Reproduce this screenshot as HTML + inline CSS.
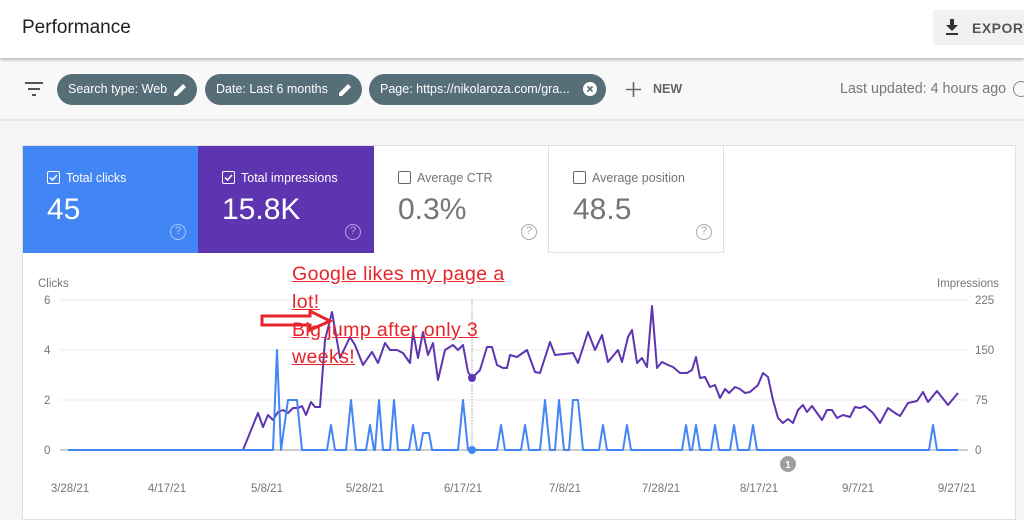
<!DOCTYPE html>
<html><head><meta charset="utf-8"><style>
*{margin:0;padding:0;box-sizing:border-box}
body{width:1024px;height:520px;overflow:hidden;background:#f5f5f5;font-family:"Liberation Sans",sans-serif;position:relative}
.hdr{position:absolute;left:0;top:0;width:1024px;height:58px;background:#fff;box-shadow:0 2px 3px rgba(0,0,0,.25);z-index:2}
.hdr h1{position:absolute;left:22px;top:17px;font-size:19px;font-weight:normal;color:#202124}
.exp{position:absolute;left:933px;top:10px;width:100px;height:35px;background:#f1f1f1;border-radius:3px}
.exp span{position:absolute;left:39px;top:10px;font-size:14px;font-weight:bold;color:#555;letter-spacing:.5px}
.bar{position:absolute;left:0;top:58px;width:1024px;height:63px;background:#f8f8f8;border-bottom:2px solid #e6e6e6}
.chip{position:absolute;top:16px;height:31px;background:#566e78;border-radius:16px;color:#fff;font-size:12.5px;line-height:31px;padding-left:11px}
.card{position:absolute;left:22px;top:145px;width:994px;height:375px;background:#fff;border:1px solid #e0e0e0}
.tile{position:absolute;top:0;height:107px;width:175px}
.tile .l{position:absolute;left:24px;top:25px;font-size:12.5px}
.tile .cb{display:inline-block;width:13px;height:13px;border:1.5px solid;border-radius:2px;vertical-align:-2px;margin-right:6px;position:relative}
.tile .cb svg{position:absolute;left:1px;top:1px}
.tile .n{position:absolute;left:24px;top:47px;font-size:30px}
.tile .q{position:absolute;left:147px;top:78px;width:16px;height:16px;border:1.5px solid;border-radius:50%;font-size:11px;text-align:center;line-height:13px}
.ann{position:absolute;left:292px;font-family:"Liberation Sans",sans-serif;font-size:19.5px;color:#e8242b;text-decoration:underline;white-space:nowrap;letter-spacing:.4px}
</style></head><body>
<div class="hdr"><h1>Performance</h1>
<div class="exp"><svg style="position:absolute;left:12px;top:9px" width="14" height="17" viewBox="0 0 14 17"><path d="M5 0h4v6h4L7 12 1 6h4z M1 14h12v2H1z" fill="#333"/></svg><span>EXPORT</span></div></div>
<div class="bar">
<svg style="position:absolute;left:25px;top:24px" width="18" height="14"><path d="M0 1h18M3 7h12M7 13h4" stroke="#555" stroke-width="2"/></svg>
<div class="chip" style="left:57px;width:140px">Search type: Web<svg style="position:absolute;right:10px;top:9px" width="13" height="13"><path d="M0 13v-3L9 1l3 3-9 9z" fill="#fff"/></svg></div>
<div class="chip" style="left:205px;width:157px">Date: Last 6 months<svg style="position:absolute;right:10px;top:9px" width="13" height="13"><path d="M0 13v-3L9 1l3 3-9 9z" fill="#fff"/></svg></div>
<div class="chip" style="left:369px;width:237px">Page: https://nikolaroza.com/gra...<svg style="position:absolute;right:9px;top:8px" width="14" height="14"><circle cx="7" cy="7" r="7" fill="#fff"/><path d="M4.5 4.5l5 5M9.5 4.5l-5 5" stroke="#566e78" stroke-width="1.6"/></svg></div>
<svg style="position:absolute;left:626px;top:24px" width="15" height="15"><path d="M7.5 0v15M0 7.5h15" stroke="#666" stroke-width="1.6"/></svg>
<span style="position:absolute;left:653px;top:24px;font-size:12.5px;font-weight:bold;color:#666">NEW</span>
<span style="position:absolute;left:840px;top:23px;font-size:14.3px;color:#777">Last updated: 4 hours ago</span>
<div style="position:absolute;left:1013px;top:23px;width:16px;height:16px;border:1.5px solid #888;border-radius:50%"></div>
</div>
<div class="card">
<div class="tile" style="left:0;background:#4285f4;color:#fff"><div class="l"><span class="cb" style="border-color:#fff"><svg width="9" height="9"><path d="M1 4.5l2.5 2.5L8 2" stroke="#fff" stroke-width="1.5" fill="none"/></svg></span>Total clicks</div><div class="n">45</div><div class="q" style="border-color:#a9c8fa;color:#a9c8fa">?</div></div>
<div class="tile" style="left:175px;width:176px;background:#5e35b1;color:#fff"><div class="l"><span class="cb" style="border-color:#fff"><svg width="9" height="9"><path d="M1 4.5l2.5 2.5L8 2" stroke="#fff" stroke-width="1.5" fill="none"/></svg></span>Total impressions</div><div class="n">15.8K</div><div class="q" style="border-color:#b6a0e0;color:#b6a0e0">?</div></div>
<div class="tile" style="left:351px;border-right:1px solid #e0e0e0;color:#757575"><div class="l"><span class="cb" style="border-color:#666"></span>Average CTR</div><div class="n">0.3%</div><div class="q" style="border-color:#aaa;color:#aaa">?</div></div>
<div class="tile" style="left:526px;border-right:1px solid #e0e0e0;border-bottom:1px solid #e0e0e0;color:#757575"><div class="l"><span class="cb" style="border-color:#666"></span>Average position</div><div class="n">48.5</div><div class="q" style="border-color:#aaa;color:#aaa">?</div></div>
</div>
<svg style="position:absolute;left:0;top:0" width="1024" height="520">
<g stroke="#e8e8e8" stroke-width="1"><path d="M60 300H968M60 350H968M60 400H968"/></g>
<path d="M60 450H968" stroke="#999" stroke-width="1"/>
<path d="M472 300V450" stroke="#999" stroke-dasharray="1.5 1.5"/>
<g font-size="11.5" fill="#757575">
<text x="38" y="287">Clicks</text><text x="937" y="287">Impressions</text>
<text x="44" y="304">6</text><text x="44" y="354">4</text><text x="44" y="404">2</text><text x="44" y="454">0</text>
<text x="975" y="304">225</text><text x="975" y="354">150</text><text x="975" y="404">75</text><text x="975" y="454">0</text>
<g text-anchor="middle"><text x="70" y="492">3/28/21</text><text x="167" y="492">4/17/21</text><text x="267" y="492">5/8/21</text><text x="365" y="492">5/28/21</text><text x="463" y="492">6/17/21</text><text x="565" y="492">7/8/21</text><text x="661" y="492">7/28/21</text><text x="759" y="492">8/17/21</text><text x="858" y="492">9/7/21</text><text x="957" y="492">9/27/21</text></g>
</g>
<polyline fill="none" stroke="#5e35b1" stroke-width="2" stroke-linejoin="round" points="243,450 258,413 263,427 268,415 273,420 278,412 283,410 288,413 293,408 298,408 302,406 306,415 311,402 315,407 320,407 325,340 332,312 340,358 350,337 355,345 363,365 372,352 378,363 385,343 390,350 397,350 403,353 410,363 413,332 418,358 423,332 428,355 433,343 438,380 445,350 453,345 458,350 463,345 468,372 472,378 480,370 487,347 492,347 497,365 503,368 507,368 510,355 517,357 527,350 535,372 540,373 550,342 555,355 573,353 578,363 588,332 595,350 602,335 608,362 618,350 622,362 628,337 632,330 637,363 642,358 647,367 652,306 657,368 662,362 668,365 673,367 680,373 687,373 692,370 696,357 700,378 705,377 710,387 715,385 720,398 725,389 729,393 735,387 740,389 745,393 750,392 758,385 763,373 768,377 773,400 778,418 783,423 788,419 793,423 798,410 803,405 807,412 812,406 822,420 827,410 832,410 837,418 843,415 850,417 855,407 860,408 865,406 873,413 880,423 888,408 895,413 900,416 908,403 917,401 923,392 928,402 937,391 948,405 958,393"/>
<polyline fill="none" stroke="#4285f4" stroke-width="2" stroke-linejoin="round" points="68,450 273,450 277,350 281,450 288,400 297,400 302,450 327,450 331,425 335,450 346,450 351,400 356,450 366,450 370,425 374,450 375,450 379,400 383,450 390,450 394,400 398,450 409,450 413,425 417,450 420,450 423,433 429,433 432,450 458,450 463,400 468,450 497,450 501,425 505,450 521,450 525,425 529,450 540,450 545,400 550,450 555,450 559,400 564,450 569,450 573,400 578,400 583,450 599,450 603,425 607,450 623,450 627,425 631,450 682,450 686,425 690,450 692,450 696,425 700,450 711,450 715,425 719,450 730,450 734,425 738,450 749,450 753,425 757,450 929,450 933,425 937,450 958,450"/>
<circle cx="472" cy="378" r="4" fill="#5e35b1"/><circle cx="472" cy="450" r="4" fill="#4285f4"/>
<circle cx="788" cy="464" r="8" fill="#9e9e9e"/><text x="788" y="468" font-size="10" font-weight="bold" fill="#fff" text-anchor="middle">1</text>
<path d="M262 316H310V311L330 321L310 330V325H262Z" fill="#fff" stroke="#e8242b" stroke-width="3"/>
</svg>
<div class="ann" style="top:263px">Google likes my page a</div>
<div class="ann" style="top:291px">lot!</div>
<div class="ann" style="top:319px">Big jump after only 3</div>
<div class="ann" style="top:346px">weeks!</div>
</body></html>
